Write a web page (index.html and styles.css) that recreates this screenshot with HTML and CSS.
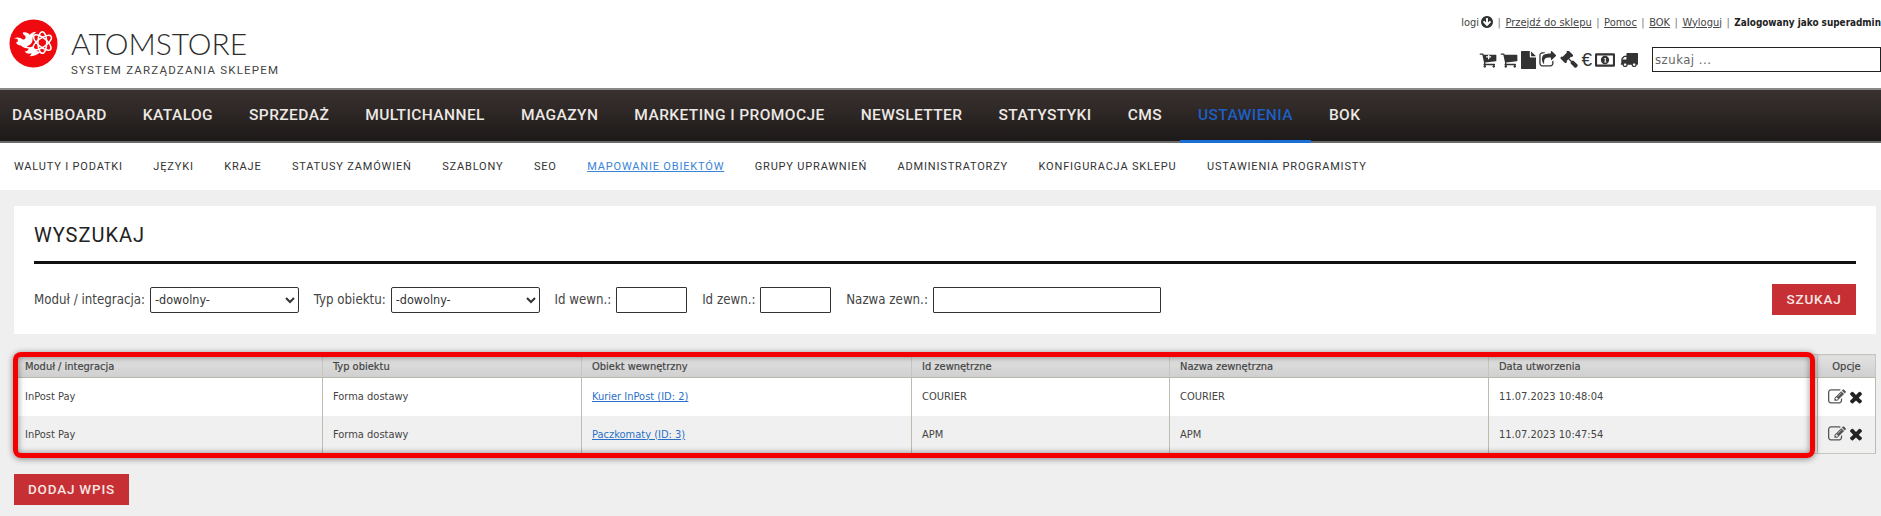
FILE: index.html
```html
<!DOCTYPE html>
<html lang="pl">
<head>
<meta charset="utf-8">
<title>Atomstore</title>
<link rel="stylesheet" href="styles.css">
</head>
<body>
<svg class="defs" aria-hidden="true">
  <symbol id="i-times" viewBox="0 0 1792 1792"><path d="M1490 1322q0 40-28 68l-136 136q-28 28-68 28t-68-28l-294-294-294 294q-28 28-68 28t-68-28l-136-136q-28-28-28-68t28-68l294-294-294-294q-28-28-28-68t28-68l136-136q28-28 68-28t68 28l294 294 294-294q28-28 68-28t68 28l136 136q28 28 28 68t-28 68l-294 294 294 294q28 28 28 68z"/></symbol>
  <symbol id="i-edit" viewBox="0 0 1792 1792"><path d="M888 1184l116-116-152-152-116 116v56h96v96h56zm440-720q-16-16-33 1l-350 350q-17 17-1 33t33-1l350-350q17-17 1-33zm80 594v190q0 119-84.500 203.500t-203.500 84.500h-832q-119 0-203.500-84.500t-84.500-203.500v-832q0-119 84.500-203.500t203.500-84.500h832q63 0 117 25 15 7 18 23 3 17-9 29l-49 49q-14 14-32 8-23-6-45-6h-832q-66 0-113 47t-47 113v832q0 66 47 113t113 47h832q66 0 113-47t47-113v-126q0-13 9-22l64-64q15-15 35-7t20 29zm-96-738l288 288-672 672h-288v-288zm444 132l-92 92-288-288 92-92q28-28 68-28t68 28l152 152q28 28 28 68t-28 68z"/></symbol>
</svg>

<header class="top">
  <a class="brand" href="#">
    <svg class="brand-mark" viewBox="0 0 50 50" aria-hidden="true">
      <circle cx="25" cy="25" r="24.500" fill="#ee0a0f"/>
      <path fill="#fff" d="M5 20c3-2 7-1 9 1 2 0 3-1 3-3-1-2-3-2-3-4 3-1 5 0 7 2 2-2 4-3 7-3-3 2-4 5-4 8 0 4-3 6-6 7 2 1 4 1 6 0 2 2 4 5 8 6-3 3-7 4-11 4 1-1 2-2 2-3-3 1-6 0-7-2 2 0 4-1 4-3-3 0-6-1-8-3-2 0-4-1-5-3 2 0 2-1 2-3-1-1-2-1-4-1z"/>
      <g fill="none" stroke="#fff" stroke-width="1.500">
        <ellipse cx="34" cy="24" rx="11" ry="4.500" transform="rotate(-35 34 24)"/>
        <ellipse cx="34" cy="24" rx="11" ry="4.500" transform="rotate(40 34 24)"/>
        <ellipse cx="34" cy="24" rx="4.500" ry="11"/>
      </g>
    </svg>
    <span class="brand-text">
      <span class="brand-name">ATOMSTORE</span>
      <span class="brand-sub">SYSTEM ZARZĄDZANIA SKLEPEM</span>
    </span>
  </a>
  <div class="top-right">
    <div class="top-links">
      <span class="logi">logi<svg class="ico-logi" viewBox="128 128 1536 1536" aria-hidden="true"><path d="M1412 897q0-27-18-45l-91-91q-18-18-45-18t-45 18l-189 189v-502q0-26-19-45t-45-19h-128q-26 0-45 19t-19 45v502l-189-189q-19-19-45-19t-45 19l-91 91q-18 18-18 45t18 45l362 362 91 91q18 18 45 18t45-18l91-91 362-362q18-18 18-45zm252-1q0 209-103 385.500t-279.500 279.500-385.500 103-385.500-103-279.500-279.500-103-385.500 103-385.500 279.500-279.500 385.500-103 385.500 103 279.500 279.500 103 385.500z"/></svg></span>
      <span class="sep">|</span><a href="#">Przejdź do sklepu</a>
      <span class="sep">|</span><a href="#">Pomoc</a>
      <span class="sep">|</span><a href="#">BOK</a>
      <span class="sep">|</span><a href="#">Wyloguj</a>
      <span class="sep">|</span><b>Zalogowany jako superadmin</b>
    </div>
    <div class="top-tools">
      <svg class="tool" viewBox="0 0 1792 1792" aria-hidden="true"><path d="M1216 576q0-26-19-45t-45-19h-128v-128q0-26-19-45t-45-19-45 19-19 45v128h-128q-26 0-45 19t-19 45 19 45 45 19h128v128q0 26 19 45t45 19 45-19 19-45v-128h128q26 0 45-19t19-45zm-512 960q0 52-38 90t-90 38-90-38-38-90 38-90 90-38 90 38 38 90zm896 0q0 52-38 90t-90 38-90-38-38-90 38-90 90-38 90 38 38 90zm128-1088v512q0 24-16 42.500t-41 21.500l-1044 122q1 7 4.500 21.500t6 26.500 2.500 22q0 16-24 64h920q26 0 45 19t19 45-19 45-45 19h-1024q-26 0-45-19t-19-45q0-14 11-39.500t29.500-59.500 20.500-38l-177-823h-204q-26 0-45-19t-19-45 19-45 45-19h256q16 0 28.500 6.500t20 15.500 13 24.500 7.500 26.500 5.500 29.500 4.500 25.500h1201q26 0 45 19t19 45z"/></svg>
      <svg class="tool" viewBox="0 0 1792 1792" aria-hidden="true"><path d="M704 1536q0 52-38 90t-90 38-90-38-38-90 38-90 90-38 90 38 38 90zm896 0q0 52-38 90t-90 38-90-38-38-90 38-90 90-38 90 38 38 90zm128-1088v512q0 24-16.500 42.500t-40.500 21.500l-1044 122q13 60 13 70 0 16-24 64h920q26 0 45 19t19 45-19 45-45 19h-1024q-26 0-45-19t-19-45q0-11 8-31.500t16-36 21.500-40 15.500-29.500l-177-823h-204q-26 0-45-19t-19-45 19-45 45-19h256q16 0 28.500 6.500t19.500 15.500 13 24.500 8 26 5.500 29.500 4.500 26h1201q26 0 45 19t19 45z"/></svg>
      <svg class="tool tool-file" viewBox="192 0 1408 1792" aria-hidden="true"><path d="M1152 512v-472q22 14 36 28l408 408q14 14 28 36h-472zm-128 32q0 40 28 68t68 28h544v1056q0 40-28 68t-68 28h-1344q-40 0-68-28t-28-68v-1600q0-40 28-68t68-28h800v544z"/></svg>
      <svg class="tool" viewBox="64 0 1728 1792" aria-hidden="true"><path d="M1472 989v259q0 119-84.500 203.500t-203.500 84.500h-832q-119 0-203.500-84.500t-84.500-203.500v-832q0-119 84.500-203.500t203.500-84.500h255q13 0 22.500 9.500t9.500 22.500q0 27-26 32-77 26-133 60-10 4-16 4h-112q-66 0-113 47t-47 113v832q0 66 47 113t113 47h832q66 0 113-47t47-113v-214q0-19 18-29 28-13 54-37 16-16 35-8 21 9 21 29zm237-496l-384 384q-18 19-45 19-12 0-25-5-39-17-39-59v-192h-160q-323 0-438 131-119 137-74 473 3 23-20 34-8 2-12 2-16 0-26-13-10-14-21-31t-39.500-68.500-49.500-99.500-38.500-114-17.500-122q0-49 3.500-91t14-90 28-88 47-81.500 68.500-74 94.500-61.500 124.500-48.500 159.500-30.500 196.500-11h160v-192q0-42 39-59 13-5 25-5 26 0 45 19l384 384q19 19 19 45t-19 45z"/></svg>
      <svg class="tool" viewBox="0 0 1792 1792" aria-hidden="true"><path d="M1771 1440q0 53-37 90l-107 108q-39 37-91 37-53 0-90-37l-363-364q-38-36-38-90 0-53 43-96l-256-256-126 126q-14 14-34 14t-34-14q2 2 12.500 12t12.500 13 10 11.500 10 13.500 6 13.500 5.500 16.500 1.500 18q0 38-28 68-3 3-16.500 18t-19 20.500-18.500 16.500-22 15.500-22 9-26 4.500q-40 0-68-28l-408-408q-28-28-28-68 0-13 4.500-26t9-22 15.500-22 16.500-18.500 20.500-19 18-16.500q30-28 68-28 10 0 18 1.500t16.500 5.500 13.500 6 13.500 10 11.500 10 13 12.500 12 12.500q-14-14-14-34t14-34l348-348q14-14 34-14t34 14q-2-2-12.500-12t-12.500-13-10-11.500-10-13.500-6-13.500-5.500-16.500-1.500-18q0-38 28-68 3-3 16.500-18t19-20.500 18.500-16.500 22-15.500 22-9 26-4.500q40 0 68 28l408 408q28 28 28 68 0 13-4.500 26t-9 22-15.500 22-16.500 18.500-20.500 19-18 16.500q-30 28-68 28-10 0-18-1.500t-16.500-5.500-13.500-6-13.500-10-11.500-10-13-12.500-12-12.500q14 14 14 34t-14 34l-126 126 256 256q43-43 96-43 52 0 91 37l363 363q37 39 37 91z"/></svg>
      <span class="euro">€</span>
      <svg class="tool tool-money" viewBox="0 0 24 16" aria-hidden="true"><path fill-rule="evenodd" d="M1.500 0h21A1.500 1.500 0 0 1 24 1.500v13a1.500 1.500 0 0 1-1.500 1.500h-21A1.500 1.500 0 0 1 0 14.500v-13A1.500 1.500 0 0 1 1.500 0zM2.500 2.500v11h19v-11z"/><path fill-rule="evenodd" d="M12 3a5 5 0 1 1 0 10 5 5 0 0 1 0-10zM11 5.500v1h.700v3.500H11v1h2.800v-1h-.8V5.500z"/></svg>
      <svg class="tool tool-truck" viewBox="0 192 1792 1408" aria-hidden="true"><path d="M640 1408q0-52-38-90t-90-38-90 38-38 90 38 90 90 38 90-38 38-90zm-384-512h384v-256h-158q-13 0-22 9l-195 195q-9 9-9 22v30zm1280 512q0-52-38-90t-90-38-90 38-38 90 38 90 90 38 90-38 38-90zm256-1088v1024q0 15-4 26.500t-13.500 18.500-16.500 11.500-23.500 6-22.500 2-25.500 0-22.500-.5q0 106-75 181t-181 75-181-75-75-181h-384q0 106-75 181t-181 75-181-75-75-181h-64q-3 0-22.500.5t-25.500 0-22.500-2-23.500-6-16.500-11.500-13.500-18.500-4-26.500q0-26 19-45t45-19v-320q0-8-.5-35t0-38 2.500-34.500 6.500-37 14-30.500 22.500-30l198-198q19-19 50.500-32t58.500-13h160v-192q0-26 19-45t45-19h1024q26 0 45 19t19 45z"/></svg>
      <input class="top-search" type="text" placeholder="szukaj ...">
    </div>
  </div>
</header>

<nav class="main-nav">
  <a href="#">DASHBOARD</a>
  <a href="#">KATALOG</a>
  <a href="#">SPRZEDAŻ</a>
  <a href="#">MULTICHANNEL</a>
  <a href="#">MAGAZYN</a>
  <a href="#">MARKETING I PROMOCJE</a>
  <a href="#">NEWSLETTER</a>
  <a href="#">STATYSTYKI</a>
  <a href="#">CMS</a>
  <a href="#" class="active">USTAWIENIA</a>
  <a href="#">BOK</a>
</nav>

<nav class="sub-nav">
  <a href="#">WALUTY I PODATKI</a>
  <a href="#">JĘZYKI</a>
  <a href="#">KRAJE</a>
  <a href="#">STATUSY ZAMÓWIEŃ</a>
  <a href="#">SZABLONY</a>
  <a href="#">SEO</a>
  <a href="#" class="active">MAPOWANIE OBIEKTÓW</a>
  <a href="#">GRUPY UPRAWNIEŃ</a>
  <a href="#">ADMINISTRATORZY</a>
  <a href="#">KONFIGURACJA SKLEPU</a>
  <a href="#">USTAWIENIA PROGRAMISTY</a>
</nav>

<main class="content">
  <section class="panel">
    <h2 class="panel-title">WYSZUKAJ</h2>
    <form class="search-form">
      <label class="fld">Moduł / integracja:
        <select class="sel"><option>-dowolny-</option></select>
      </label>
      <label class="fld">Typ obiektu:
        <select class="sel"><option>-dowolny-</option></select>
      </label>
      <label class="fld">Id wewn.:
        <input class="inp inp-id" type="text">
      </label>
      <label class="fld">Id zewn.:
        <input class="inp inp-id" type="text">
      </label>
      <label class="fld">Nazwa zewn.:
        <input class="inp inp-name" type="text">
      </label>
      <button class="btn btn-search" type="button">SZUKAJ</button>
    </form>
  </section>

  <div class="table-wrap">
    <table class="grid">
      <colgroup>
        <col class="c1"><col class="c2"><col class="c3"><col class="c4"><col class="c5"><col class="c6"><col class="c7">
      </colgroup>
      <thead>
        <tr>
          <th>Moduł / integracja</th>
          <th>Typ obiektu</th>
          <th>Obiekt wewnętrzny</th>
          <th>Id zewnętrzne</th>
          <th>Nazwa zewnętrzna</th>
          <th>Data utworzenia</th>
          <th class="opts">Opcje</th>
        </tr>
      </thead>
      <tbody>
        <tr>
          <td>InPost Pay</td>
          <td>Forma dostawy</td>
          <td><a href="#">Kurier InPost (ID: 2)</a></td>
          <td>COURIER</td>
          <td>COURIER</td>
          <td>11.07.2023 10:48:04</td>
          <td class="opts"><svg class="act act-edit" aria-hidden="true"><use href="#i-edit"/></svg><svg class="act" aria-hidden="true"><use href="#i-times"/></svg></td>
        </tr>
        <tr>
          <td>InPost Pay</td>
          <td>Forma dostawy</td>
          <td><a href="#">Paczkomaty (ID: 3)</a></td>
          <td>APM</td>
          <td>APM</td>
          <td>11.07.2023 10:47:54</td>
          <td class="opts"><svg class="act act-edit" aria-hidden="true"><use href="#i-edit"/></svg><svg class="act" aria-hidden="true"><use href="#i-times"/></svg></td>
        </tr>
      </tbody>
    </table>
    <div class="highlight"></div>
  </div>

  <button class="btn btn-add" type="button">DODAJ WPIS</button>
</main>
</body>
</html>
```

FILE: styles.css
```css
* { box-sizing: border-box; }
html, body { margin: 0; padding: 0; }
body {
  width: 1881px;
  height: 516px;
  overflow: hidden;
  background: #efefef;
  color: #333;
  font: 11px "DejaVu Sans Condensed", "DejaVu Sans", sans-serif;
}
a { color: inherit; }
.defs { display: none; }

.top {
  display: flex;
  justify-content: space-between;
  height: 88px;
  background: #fff;
}
.brand {
  display: flex;
  align-items: flex-start;
  padding: 19px 0 0 9px;
  text-decoration: none;
  color: #333;
}
.brand-mark { width: 49px; height: 49px; display: block; }
.brand-text { display: flex; flex-direction: column; margin-left: 13px; }
.brand-name {
  font: 300 30px/36px Lato, sans-serif;
  margin-top: 6px;
  color: #2c2c2c;
}
.brand-sub {
  font: 400 11.500px/16px "Roboto", sans-serif;
  letter-spacing: 1.200px;
  color: #444;
  margin-top: 1px;
}

.top-right {
  display: flex;
  flex-direction: column;
  align-items: flex-end;
  padding-top: 15px;
}
.top-links {
  display: flex;
  align-items: center;
  height: 14px;
  white-space: nowrap;
  color: #444;
  font-size: 11px;
}
.top-links b { color: #222; font-size: 9.900px; }
.logi { display: inline-flex; align-items: center; }
.ico-logi { width: 12px; height: 12px; fill: #333; margin-left: 2px; }
.sep { margin: 0 4.500px; color: #777; }

.top-tools {
  display: flex;
  align-items: center;
  margin-top: 18px;
  gap: 3px;
}
.tool { width: 18px; height: 18px; fill: #333; display: block; }
.tool-file { width: 15px; }
.tool-money { width: 20px; height: 14px; }
.tool-truck { width: 18px; height: 15px; margin-left: 2px; }
.euro { font: 400 19px/18px "Liberation Sans", sans-serif; color: #333; }
.top-search {
  width: 229px;
  height: 25px;
  margin-left: 11px;
  padding: 0 2px;
  border: 1px solid #222;
  background: #fff;
  font: 13px "DejaVu Sans Condensed", sans-serif;
  letter-spacing: 0.5px;
}
.top-search::placeholder { color: #666; opacity: 1; }

.main-nav {
  display: flex;
  height: 55px;
  padding-left: 12px;
  gap: 36px;
  background: linear-gradient(#3a3230, #1d1918);
  border-top: 2px solid #8a8a8a;
  border-bottom: 2px solid #6a6a6a;
}
.main-nav a {
  position: relative;
  font: 500 15.500px/51px "Roboto", sans-serif;
  letter-spacing: 0.420px;
  color: #ece8e4;
  text-decoration: none;
}
.main-nav a.active { color: #1d5fc4; }
.main-nav a.active::after {
  content: "";
  position: absolute;
  left: -18px;
  right: -18px;
  bottom: -2px;
  height: 3px;
  background: #1a6fd6;
}

.sub-nav {
  display: flex;
  height: 47px;
  align-items: center;
  padding: 0 0 0 14px;
  gap: 30.500px;
  background: #fff;
}
.sub-nav a {
  font: 400 11px/14px "Roboto", sans-serif;
  letter-spacing: 0.820px;
  color: #333;
  text-decoration: none;
  white-space: nowrap;
}
.sub-nav a.active { color: #3a84d8; text-decoration: underline; }

.content { padding: 16px 5px 0 14px; }

.panel {
  height: 128px;
  padding: 0 20px;
  background: #fff;
}
.panel-title {
  margin: 0;
  height: 58px;
  border-bottom: 3px solid #111;
  font: 400 20px/58px "Roboto", sans-serif;
  letter-spacing: 1px;
  color: #222;
}
.search-form {
  display: flex;
  align-items: center;
  margin-top: 20px;
  height: 31px;
  gap: 14.800px;
}
.fld {
  display: flex;
  align-items: center;
  gap: 5px;
  font-size: 13.200px;
  color: #444;
  white-space: nowrap;
}
.sel {
  width: 149px;
  height: 26px;
  padding: 0;
  border: 1px solid #333;
  border-radius: 2px;
  background: #fff;
  color: #333;
  font: 12.500px "DejaVu Sans Condensed", sans-serif;
}
.inp {
  height: 26px;
  border: 1px solid #333;
  border-radius: 1px;
  background: #fff;
}
.inp-id { width: 71px; }
.inp-name { width: 228px; }

.btn {
  display: block;
  border: 0;
  background: #c62f33;
  color: #f6e6e4;
  font: 500 13.500px/31px "Roboto", sans-serif;
  letter-spacing: 0.800px;
  padding: 0;
  height: 31px;
}
.btn-search { width: 84px; margin-left: auto; }
.btn-add { width: 115px; margin-top: 20px; }

.table-wrap {
  position: relative;
  margin-top: 20px;
}
.grid {
  width: 100%;
  table-layout: fixed;
  border-collapse: collapse;
  font-size: 11px;
  color: #444;
}
.c1 { width: 308px; }
.c2 { width: 259px; }
.c3 { width: 330px; }
.c4 { width: 258px; }
.c5 { width: 319px; }
.c6 { width: 329px; }
.grid th {
  height: 23px;
  padding: 0 0 0 10px;
  text-align: left;
  font-weight: 400;
  -webkit-text-stroke: 0.2px #444;
  background: linear-gradient(#e2e2e2, #cfcfcf);
  border: 1px solid #c6c6be;
  border-bottom-color: #b8b8ac;
}
.grid td {
  height: 38px;
  padding: 0 0 0 10px;
  border-left: 1px solid #bcbcb0;
  border-right: 1px solid #bcbcb0;
  background: #fff;
}
.grid tbody tr:nth-child(2) td { background: #f0f0f0; }
.grid tbody tr:last-child td { border-bottom: 1px solid #c6c6be; }
.grid a { color: #2a70c8; text-decoration: underline; }
.grid .opts { padding: 0; text-align: center; }
.grid td.opts { white-space: nowrap; }
.act { width: 18px; height: 18px; fill: #222; vertical-align: middle; }
.act-edit { fill: #555; margin-right: 1px; }

.highlight {
  position: absolute;
  left: -1px;
  top: -2px;
  width: 1802px;
  height: 106px;
  border: 5px solid #f50000;
  border-radius: 8px;
  box-shadow: 0 1px 6px rgba(0, 0, 0, 0.45), inset 0 0 6px rgba(0, 0, 0, 0.45);
  pointer-events: none;
}
```
